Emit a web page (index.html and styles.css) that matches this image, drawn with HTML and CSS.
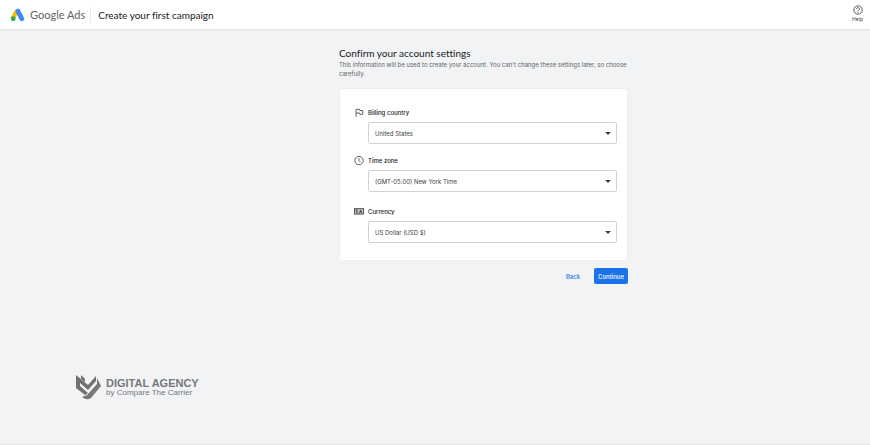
FILE: index.html
```html
<!DOCTYPE html>
<html lang="en">
<head>
    <meta charset="UTF-8">
    <meta name="viewport" content="width=device-width, initial-scale=1.0">
    <title>Create your first campaign</title>
    <link rel="stylesheet" href="styles.css">
</head>
<body>
    <header class="header">
        <svg class="ads-logo" viewBox="0 0 28 26">
            <path d="M13 5 L6 18" stroke="#fbbc04" stroke-width="8" fill="none"/>
            <path d="M15 6 L22 20" stroke="#4285f4" stroke-width="9" stroke-linecap="round" fill="none"/>
            <circle cx="6" cy="20" r="4.500" fill="#34a853"/>
        </svg>
        <span class="brand">Google Ads</span>
        <h1 class="page-title">Create your first campaign</h1>
        <button class="help" type="button">
            <svg class="help-icon" viewBox="0 0 24 24">
                <circle cx="12" cy="12" r="10" fill="none" stroke="#3c4043" stroke-width="2"/>
                <path d="M8.500 10 a3.500 3.500 0 1 1 5.500 2.700 c-1.500 1-2 1.500-2 2.800 M12 17 v2" fill="none" stroke="#3c4043" stroke-width="2"/>
            </svg>
            Help
        </button>
    </header>

    <main class="content">
        <form class="settings">
            <h2 class="settings-title">Confirm your account settings</h2>
            <p class="settings-text">This information will be used to create your account. You can't change these settings later, so choose carefully.</p>

            <div class="card">
                <div class="field">
                    <svg class="field-icon" viewBox="0 0 24 24">
                        <path d="M5 21 V3 H13 L14 6 H21 V15 H14 L13 12 H5" fill="none" stroke="#3c4043" stroke-width="2"/>
                    </svg>
                    <label class="field-label" for="country">Billing country</label>
                    <div class="select-wrap">
                        <select class="field-select" id="country">
                            <option>United States</option>
                        </select>
                    </div>
                </div>
                <div class="field">
                    <svg class="field-icon" viewBox="0 0 24 24">
                        <circle cx="12" cy="11" r="10" fill="none" stroke="#3c4043" stroke-width="2"/>
                        <path d="M12 5 V11 L16 15" fill="none" stroke="#3c4043" stroke-width="2"/>
                    </svg>
                    <label class="field-label" for="timezone">Time zone</label>
                    <div class="select-wrap">
                        <select class="field-select" id="timezone">
                            <option>(GMT-05:00) New York Time</option>
                        </select>
                    </div>
                </div>
                <div class="field field-currency">
                    <svg class="field-icon" viewBox="0 0 24 24">
                        <rect x="1" y="4" width="22" height="13" fill="#c4c6c8" stroke="#3c4043" stroke-width="2"/>
                        <path d="M9 7 H5 V10 H9 M5 14 H10 M13 15 L16 7 L19 15 M14 12 H18" fill="none" stroke="#3c4043" stroke-width="2"/>
                    </svg>
                    <label class="field-label" for="currency">Currency</label>
                    <div class="select-wrap">
                        <select class="field-select" id="currency">
                            <option>US Dollar (USD $)</option>
                        </select>
                    </div>
                </div>
            </div>

            <div class="actions">
                <button class="btn" type="button">Back</button>
                <button class="btn btn-primary" type="submit">Continue</button>
            </div>
        </form>
    </main>

    <footer class="footer">
        <svg class="agency-logo" viewBox="0 0 26 26">
            <path d="M1 1 L13 11 L21 2 V7 L13 16 L5 9 V12 L13 19 L10 21 L1 14 Z" fill="#707173"/>
            <path d="M22 4 L26 12 L16 24 Q12 27 7 23 L12 21 L22 10 Z" fill="#77787a"/>
            <path d="M6 1 L10 5 V8 L6 5 Z" fill="#707173"/>
        </svg>
        <div class="agency">
            <strong class="agency-name">DIGITAL AGENCY</strong>
            <span class="agency-by">by Compare The Carrier</span>
        </div>
    </footer>
</body>
</html>
```

FILE: styles.css
```css
* {
    box-sizing: border-box;
}
body {
    margin: 0;
    min-height: 100vh;
    display: flex;
    flex-direction: column;
    background-color: #f1f3f4;
    border-bottom: 1px solid #e4e6e8;
    font-family: Inter, sans-serif;
    color: #3c4043;
}
button {
    font-family: inherit;
    background: none;
    border: none;
    cursor: pointer;
}
.header {
    display: flex;
    align-items: center;
    height: 29px;
    padding: 0 7px 0 10px;
    background-color: #fff;
    box-shadow: 0 1px 1px rgba(0, 0, 0, 0.06);
}
.ads-logo {
    width: 15px;
    height: 14px;
    margin-right: 5px;
}
.brand {
    padding-right: 5px;
    border-right: 1px solid #e8eaed;
    font-family: Lato, sans-serif;
    font-size: 11px;
    line-height: 16px;
    color: #5f6368;
}
.page-title {
    flex: 1;
    margin: 0 0 0 7px;
    font-family: Lato, sans-serif;
    font-size: 10px;
    font-weight: 400;
    font-variant-ligatures: none;
    color: #202124;
}
.help {
    display: flex;
    flex-direction: column;
    align-items: center;
    padding: 0;
    font-size: 5px;
    line-height: 9px;
    color: #3c4043;
}
.help-icon {
    width: 10px;
    height: 10px;
}
.content {
    flex: 1;
    padding: 18px 0 0 97px;
}
.settings {
    width: 289px;
    margin: 0 auto;
}
.settings-title {
    margin: 0;
    font-family: Lato, sans-serif;
    font-size: 10px;
    line-height: 13px;
    font-weight: 400;
    font-variant-ligatures: none;
    color: #202124;
}
.settings-text {
    margin: 0;
    font-size: 6px;
    line-height: 9px;
    color: #5f6368;
}
.card {
    display: flex;
    flex-direction: column;
    gap: 10px;
    margin-top: 10px;
    padding: 18px 10px 17px 11px;
    background-color: #fff;
    border: 1px solid #eceef0;
    border-radius: 3px;
}
.field {
    display: grid;
    grid-template-columns: 10px 1fr;
    column-gap: 4px;
    row-gap: 3px;
    align-items: center;
    padding-left: 3px;
}
.field + .field {
    margin-top: 1px;
}
.field + .field-currency {
    margin-top: 4px;
}
.field-icon {
    width: 10px;
    height: 10px;
}
.field-label {
    font-size: 6px;
    line-height: 12px;
    font-weight: 500;
    color: #202124;
}
.select-wrap {
    grid-column: 2;
    display: flex;
    position: relative;
    height: 22px;
}
/* dropdown arrow */
.select-wrap::after {
    content: "";
    position: absolute;
    top: 10px;
    right: 6px;
    border: 3px solid transparent;
    border-top-color: #3c4043;
    border-bottom: 0;
    pointer-events: none;
}
.field-select {
    width: 100%;
    height: 100%;
    padding: 0 6px;
    appearance: none;
    border: 1px solid #d0d2d5;
    border-radius: 2px;
    background: #fff;
    font-family: inherit;
    font-size: 6px;
    color: #3c4043;
}
.actions {
    display: flex;
    justify-content: flex-end;
    gap: 10px;
    margin-top: 7px;
}
.btn {
    height: 16px;
    padding: 0 4px;
    border-radius: 2px;
    font-size: 6px;
    font-weight: 500;
    color: #1a73e8;
}
.btn-primary {
    background-color: #1a73e8;
    color: #fff;
}
.footer {
    display: flex;
    align-items: center;
    gap: 5px;
    padding: 0 75px 44px;
    font-family: "Liberation Sans", Arial, sans-serif;
    color: #77787b;
}
.agency-logo {
    width: 26px;
    height: 26px;
}
.agency {
    display: flex;
    flex-direction: column;
}
.agency-name {
    font-size: 11px;
    line-height: 10px;
}
.agency-by {
    font-size: 8px;
    line-height: 9px;
}
```
